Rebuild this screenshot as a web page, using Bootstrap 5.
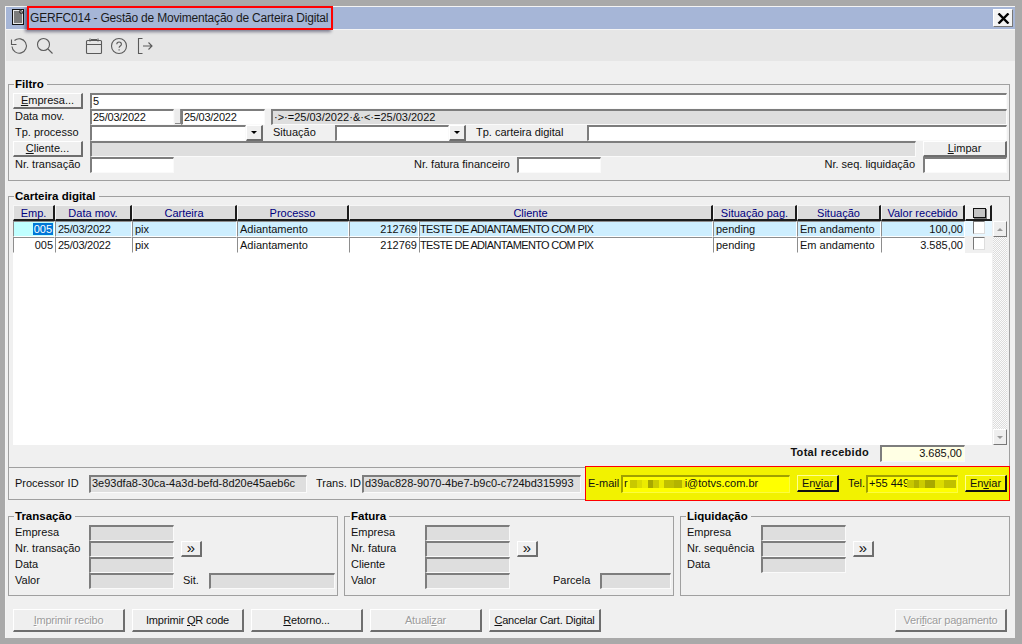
<!DOCTYPE html>
<html lang="pt-BR">
<head>
<meta charset="utf-8">
<title>GERFC014</title>
<link href="https://cdn.jsdelivr.net/npm/bootstrap@5.3.0/dist/css/bootstrap.min.css" rel="stylesheet">
<style>
html,body{margin:0;height:644px;overflow:hidden;background:#a9a9a9}
body{font:11px/16px "Liberation Sans",Arial,sans-serif;color:#111}
.shell{width:1022px;height:644px;padding:6px 7px 6px 5px;background:#a9a9a9}
.pane{height:632px;background:#f0f0f0;border-left:1px solid #f4f4f4;border-top:1px solid #f4f4f4}
.ttl{height:22px;background:#a6b6d7;padding-left:6px;position:relative;flex:none}
.ttl-ico{margin-top:2px;flex:none}
.ttl-text{font-size:12px;line-height:22px;color:#1a1a1a;margin-left:5px;letter-spacing:-.2px;white-space:nowrap}
.ttl-mark{position:absolute;left:21px;top:-1px;width:306px;height:24px;border:2px solid #f00;box-shadow:-2px 2px 3px rgba(0,0,40,.45)}
.xbtn{width:20px;height:18px;margin:2px 2px 0 auto;background:#f3f3f3;border:1px solid;border-color:#fff #777 #777 #fff;padding:0;border-radius:0;display:flex;align-items:center;justify-content:center}
.tools{height:32px;background:#e6e6e6;border-top:1px solid #f4f4f4;padding-left:3px;flex:none}
.tools svg{flex:none}
.ti-mag{margin-left:7px}.ti-cal{margin-left:31px}.ti-hlp{margin-left:7px}.ti-out{margin-left:8px}
.fs{border:1px solid #a0a0a0;min-width:0;margin:0;display:block}
.fs>legend{float:none;width:auto;padding:0 3px 0 1px;font:700 11.5px/14px "Liberation Sans",Arial,sans-serif;color:#000;margin:0 0 0 1px}
.fs-filtro{margin:16px 5px 0 2px;padding:2px 2px 7px 4px}
.fs-cart{margin:8px 5px 0 2px;padding:2px 2px 5px 4px}
.rw{height:16px;display:flex;align-items:stretch}
.rw>*{flex:none}
.lb{padding-left:2px;white-space:nowrap;line-height:15px}
.lb-r{text-align:right;white-space:nowrap;line-height:15px}
.dt{letter-spacing:-.25px}
.form-control.fld{border-radius:0;border-width:2px 1px 1px 2px;border-style:solid;border-color:#7d7d7d #fafafa #fafafa #7d7d7d;min-height:0;height:16px;padding:0 0 0 1px;font:inherit;line-height:13px;color:#111;background:#fff;box-shadow:none;white-space:nowrap;overflow:hidden;flex:none}
.form-control.fld.grow{flex:1 1 0;width:auto;min-width:0}
.form-control.fld.gr,.form-control.fld:disabled{background:#dedede;opacity:1}
.form-control.fld.ye{background:#ffffe4;text-align:right;padding-right:2px}
.btn.wb{border-radius:0;padding:0;font:inherit;line-height:13px;color:#111;background:#efefef;border-style:solid;border-width:1px 2px 2px 1px;border-color:#fff #6e6e6e #6e6e6e #fff;--bs-btn-hover-bg:#efefef;white-space:nowrap}
.btn.wb u{text-underline-offset:1px}
.btn.wb:disabled{opacity:1;color:#9c9c9c;text-shadow:1px 1px 0 #fff;background:#efefef;border-color:#fff #6e6e6e #6e6e6e #fff}
.btn.wb.dd{width:17px;height:16px;flex:none;display:flex;align-items:center;justify-content:center}
.dd-arrow{display:block;width:0;height:0;border:3px solid transparent;border-top:3px solid #000;border-bottom:0}
.form-control.w84,.w84{width:84px}
.form-control.w85{width:85px}
.form-control.w156{width:156px}.form-control.w114{width:114px}.form-control.w126{width:126px}.form-control.w71{width:71px}
.form-control.w218{width:218px}.form-control.w219{width:219px}.form-control.w169{width:169px}.form-control.w92{width:92px}
.form-control.tot-v{width:85px;height:17px;margin-right:42px}
.w70{width:70px}.w77{width:77px}.w336{width:336px}.w314{width:314px}.w62{width:62px}.w111{width:111px}
.g7{margin-left:7px}.g6{margin-left:6px}.g8{margin-left:8px}.g10{margin-left:10px}
.spin{width:7px;height:16px}
.spin-btn{display:block;height:15px;width:6px;margin-left:1px;background:#ececec;border-right:1px solid #8a8a8a;border-bottom:1px solid #8a8a8a}
.gridwrap{width:979px;height:240px;background:#fff;flex:none}
.tb{table-layout:fixed;border-collapse:separate;border-spacing:0;width:979px;margin:0}
.c42{width:42px}.c77{width:77px}.c105{width:105px}.c112{width:112px}.c70{width:70px}.c294{width:294px}.c84{width:84px}.c27{width:27px}
.tb th{height:16px;padding:0;font-weight:400;color:#000080;text-align:center;background:#dcdcdc;border-style:solid;border-width:1px 2px 2px 1px;border-color:#f6f6f6 #1c1c1c #1c1c1c #f6f6f6;line-height:12px;white-space:nowrap;overflow:hidden}
.tb td{height:16px;padding:0 1px 0 2px;border-style:solid;border-width:1px;border-color:#8d8d8d #fff #fff #8d8d8d;line-height:13px;white-space:nowrap;overflow:hidden;background:#fff}
.tb tr.sel td{background:#cdeefe}
.tb tr.sel td.c0{background:#c0ffff}
.tb td.num{text-align:right}
.tb td.caps{letter-spacing:-.65px;padding-left:0}
.tb th.hchk{background:#f0f0f0}
.tb td.tk{padding:0;background:#f0f0f0;border:0;border-bottom:1px solid #f0f0f0;vertical-align:top}
.tb tr.sel td.tk{background:#e6f6ff}
.hb{display:block;width:13px;height:10px;margin:0 auto 0 7px;background:#c4c4c4;border:1px solid #111;box-shadow:1px 1px 0 #777}
.ck{display:block;width:12px;height:13px;margin:0 0 0 8px;background:#fff;border:1px solid;border-color:#777 #ddd #ddd #777}
.hl{background:#0078d7;color:#fff;padding:0 1px}
.scr{width:14px;margin:16px 0 0 1px;height:224px;flex:none;background-image:repeating-conic-gradient(#dcdcdc 0 25%,#fbfbfb 0 50%);background-size:2px 2px;display:flex;flex-direction:column;justify-content:space-between}
.sb{height:16px;background:#eee;border:1px solid;border-color:#fff #777 #777 #fff;display:flex;align-items:center;justify-content:center}
.ar-up{width:0;height:0;border:3px solid transparent;border-bottom:3px solid #999;border-top:0}
.ar-dn{width:0;height:0;border:3px solid transparent;border-top:3px solid #999;border-bottom:0}
.totl{height:17px;display:flex;justify-content:flex-end}
.tot-l{font-weight:700;font-size:11px;margin-right:11px;line-height:15px;letter-spacing:.3px}
.pbox{margin:-1px 5px 0 2px;height:33px;border:1px solid #a0a0a0;flex:none}
.form-control.fld.tall{height:18px}
.yb{width:425px;height:35px;margin:-1px -1px -1px auto;background:#f2f200;border:1px solid #f00}
.lb-p{line-height:15px;white-space:nowrap;flex:none}
.pl-a{margin-left:6px;width:74px}.pl-b{margin-left:9px;width:46px}.pl-c{margin-left:2px;width:33px}.pl-d{margin-left:9px;width:18px}
.form-control.fld.ym{background:#ff0;border-color:#a0a000 #fcfc40 #fcfc40 #a0a000}
.pix{display:inline-block;height:8px;vertical-align:-1px}
.pix1{width:57px;background:linear-gradient(90deg,#f8f800 0 2px,#c8c800 2px 9px,#dcdc00 9px 14px,#ecec00 14px 20px,#a8a800 20px 25px,#cccc00 25px 31px,#ecec00 31px 36px,#c0c000 36px 46px,#b4b400 46px 54px,#e8e800 54px 57px)}
.pix2{width:49px;background:linear-gradient(90deg,#c8c800 0 7px,#b0b000 7px 12px,#cccc00 12px 18px,#a8a800 18px 28px,#dcdc00 28px 37px,#c0c000 37px 49px);margin-left:-2px}
.btn.wb.yenv{width:42px;height:17px;flex:none;background:#f2f200;border-color:#ffff90 #111 #111 #ffff90}
.lowr{margin:9px 5px 0 2px;gap:6px;flex:none}
.fs-low{width:330px;flex:none;padding:2px 2px 6px 6px}
.fs-low>legend{margin-left:-1px}
.lw74{width:74px;white-space:nowrap;line-height:15px}
.lb0{white-space:nowrap;line-height:15px}
.btn.wb.go{width:21px;height:16px;flex:none;margin-left:7px;font-size:15px;line-height:10px;padding-bottom:2px}
.sit-l{width:26px;margin-left:9px}
.par-l{width:47px;margin-left:43px;white-space:nowrap;line-height:15px}
.acts{margin:13px 0 0 7px;gap:7px;padding-right:8px;flex:none}
.btn.wb.act{width:112px;height:23px;flex:none;letter-spacing:-.2px}
</style>
</head>
<body>
<div class="shell">
<div class="pane d-flex flex-column">
  <div class="ttl d-flex align-items-start">
    <svg width="13" height="17" viewBox="0 0 13 17" class="ttl-ico"><rect x=".5" y=".5" width="11" height="15" fill="#e8e8e8" stroke="#111"/><path d="M2 3h8M2 5h8M2 7h8M2 9h8M2 11h8M2 13h8" stroke="#111" stroke-width="1"/><path d="M8 .5l3.500 3.500H8z" fill="#fff" stroke="#111"/></svg>
    <span class="ttl-text">GERFC014 - Gestão de Movimentação de Carteira Digital</span>
    <span class="ttl-mark"></span>
    <button type="button" class="xbtn" aria-label="Fechar"><svg width="13" height="11" viewBox="0 0 13 11"><path d="M1.500 .5l10 10M11.500 .5l-10 10" stroke="#000" stroke-width="2.400"/></svg></button>
  </div>
  <div class="tools d-flex align-items-center">
    <svg width="20" height="18" viewBox="0 0 20 18" fill="none" stroke="#5a5a5a" stroke-width="1.100"><path d="M5.500 3.500A7.200 7.200 0 1 1 3 9.500"/><path d="M2.500 2.500v5h5"/></svg>
    <svg width="18" height="18" viewBox="0 0 18 18" fill="none" stroke="#5a5a5a" stroke-width="1.100" class="ti-mag"><circle cx="7.500" cy="7.500" r="6"/><path d="M12 12l4.500 4.500"/></svg>
    <svg width="18" height="18" viewBox="0 0 18 18" fill="none" stroke="#5a5a5a" stroke-width="1.100" class="ti-cal"><rect x="1.500" y="3.500" width="15" height="13" rx="1"/><path d="M1.500 7.500h15M5 1.500v3M13 1.500v3M6 2.500h6"/></svg>
    <svg width="18" height="18" viewBox="0 0 18 18" fill="none" stroke="#5a5a5a" stroke-width="1.100" class="ti-hlp"><circle cx="9" cy="9" r="7.500"/><path d="M6.800 7.200c0-3 4.600-3 4.600 0 0 1.800-2.300 1.800-2.300 3.500"/><path d="M9.100 12.300v1.200"/></svg>
    <svg width="18" height="18" viewBox="0 0 18 18" fill="none" stroke="#5a5a5a" stroke-width="1.100" class="ti-out"><path d="M6.500 1.500h-4v15h4M7 9h9M12.500 5.500L16 9l-3.500 3.500"/></svg>
  </div>

  <fieldset class="fs fs-filtro">
    <legend>Filtro</legend>
    <div class="rw"><button type="button" class="btn wb w70"><u>E</u>mpresa...</button><div class="form-control fld g7 grow">5</div></div>
    <div class="rw"><span class="lb w77">Data mov.</span><div class="form-control fld w84 dt">25/03/2022</div><span class="spin"><span class="spin-btn"></span></span><div class="form-control fld w84 dt">25/03/2022</div><div class="form-control fld gr g6 grow">·&gt;·=25/03/2022·&amp;·&lt;·=25/03/2022</div></div>
    <div class="rw"><span class="lb w77">Tp. processo</span><input class="form-control fld w156" aria-label="Tp. processo" readonly><button type="button" class="btn wb dd" aria-label="Abrir"><i class="dd-arrow"></i></button><span class="lb-p g10 w62">Situação</span><input class="form-control fld w114" aria-label="Situação" readonly><button type="button" class="btn wb dd" aria-label="Abrir"><i class="dd-arrow"></i></button><span class="lb-p g10 w111">Tp. carteira digital</span><input class="form-control fld grow" aria-label="Tp. carteira digital" readonly></div>
    <div class="rw"><button type="button" class="btn wb w70"><u>C</u>liente...</button><div class="form-control fld gr g7 grow"></div><button type="button" class="btn wb w84 g7"><u>L</u>impar</button></div>
    <div class="rw"><span class="lb w77">Nr. transação</span><input class="form-control fld w84" aria-label="Nr. transação" readonly><span class="lb-r w336">Nr. fatura financeiro</span><input class="form-control fld w84 g7" aria-label="Nr. fatura financeiro" readonly><span class="lb-r w314">Nr. seq. liquidação</span><input class="form-control fld w84 g8" aria-label="Nr. seq. liquidação" readonly></div>
  </fieldset>

  <fieldset class="fs fs-cart">
    <legend>Carteira digital</legend>
    <div class="d-flex">
      <div class="gridwrap">
        <table class="tb">
          <colgroup><col class="c42"><col class="c77"><col class="c105"><col class="c112"><col class="c70"><col class="c294"><col class="c84"><col class="c84"><col class="c84"><col class="c27"></colgroup>
          <thead><tr><th>Emp.</th><th>Data mov.</th><th>Carteira</th><th>Processo</th><th colspan="2">Cliente</th><th>Situação pag.</th><th>Situação</th><th>Valor recebido</th><th class="hchk"><i class="hb"></i></th></tr></thead>
          <tbody>
            <tr class="sel"><td class="num c0"><span class="hl">005</span></td><td class="dt">25/03/2022</td><td>pix</td><td>Adiantamento</td><td class="num">212769</td><td class="caps">TESTE DE ADIANTAMENTO COM PIX</td><td>pending</td><td>Em andamento</td><td class="num">100,00</td><td class="tk"><i class="ck"></i></td></tr>
            <tr><td class="num">005</td><td class="dt">25/03/2022</td><td>pix</td><td>Adiantamento</td><td class="num">212769</td><td class="caps">TESTE DE ADIANTAMENTO COM PIX</td><td>pending</td><td>Em andamento</td><td class="num">3.585,00</td><td class="tk"><i class="ck"></i></td></tr>
          </tbody>
        </table>
      </div>
      <div class="scr"><span class="sb"><i class="ar-up"></i></span><span class="sb"><i class="ar-dn"></i></span></div>
    </div>
    <div class="totl"><span class="tot-l">Total recebido</span><div class="form-control fld ye tot-v">3.685,00</div></div>
  </fieldset>

  <div class="pbox d-flex align-items-center">
    <span class="lb-p pl-a">Processor ID</span>
    <div class="form-control fld gr tall w218">3e93dfa8-30ca-4a3d-befd-8d20e45aeb6c</div>
    <span class="lb-p pl-b">Trans. ID</span>
    <div class="form-control fld gr tall w219">d39ac828-9070-4be7-b9c0-c724bd315993</div>
    <div class="yb d-flex align-items-center">
      <span class="lb-p pl-c">E-mail</span>
      <div class="form-control fld tall ym w169">r<span class="pix pix1"></span>i@totvs.com.br</div>
      <button type="button" class="btn wb yenv g7">En<u>v</u>iar</button>
      <span class="lb-p pl-d">Tel.</span>
      <div class="form-control fld tall ym w92">+55 449<span class="pix pix2"></span></div>
      <button type="button" class="btn wb yenv g7">En<u>v</u>iar</button>
    </div>
  </div>

  <div class="lowr d-flex">
    <fieldset class="fs fs-low">
      <legend>Transação</legend>
      <div class="rw"><span class="lw74">Empresa</span><input class="form-control fld w85" aria-label="Empresa" disabled></div>
      <div class="rw"><span class="lw74">Nr. transação</span><input class="form-control fld w85" aria-label="Nr. transação" disabled><button type="button" class="btn wb go">»</button></div>
      <div class="rw"><span class="lw74">Data</span><input class="form-control fld w85" aria-label="Data" disabled></div>
      <div class="rw"><span class="lw74">Valor</span><input class="form-control fld w85" aria-label="Valor" disabled><span class="lb0 sit-l">Sit.</span><input class="form-control fld w126" aria-label="Sit." disabled></div>
    </fieldset>
    <fieldset class="fs fs-low">
      <legend>Fatura</legend>
      <div class="rw"><span class="lw74">Empresa</span><input class="form-control fld w85" aria-label="Empresa" disabled></div>
      <div class="rw"><span class="lw74">Nr. fatura</span><input class="form-control fld w85" aria-label="Nr. fatura" disabled><button type="button" class="btn wb go">»</button></div>
      <div class="rw"><span class="lw74">Cliente</span><input class="form-control fld w85" aria-label="Cliente" disabled></div>
      <div class="rw"><span class="lw74">Valor</span><input class="form-control fld w85" aria-label="Valor" disabled><span class="par-l">Parcela</span><input class="form-control fld w71" aria-label="Parcela" disabled></div>
    </fieldset>
    <fieldset class="fs fs-low">
      <legend>Liquidação</legend>
      <div class="rw"><span class="lw74">Empresa</span><input class="form-control fld w85" aria-label="Empresa" disabled></div>
      <div class="rw"><span class="lw74">Nr. sequência</span><input class="form-control fld w85" aria-label="Nr. sequência" disabled><button type="button" class="btn wb go">»</button></div>
      <div class="rw"><span class="lw74">Data</span><input class="form-control fld w85" aria-label="Data" disabled></div>
      <div class="rw"></div>
    </fieldset>
  </div>

  <div class="acts d-flex">
    <button type="button" class="btn wb act" disabled><u>I</u>mprimir recibo</button>
    <button type="button" class="btn wb act">Imprimir <u>Q</u>R code</button>
    <button type="button" class="btn wb act"><u>R</u>etorno...</button>
    <button type="button" class="btn wb act" disabled>Atuali<u>z</u>ar</button>
    <button type="button" class="btn wb act"><u>C</u>ancelar Cart. Digital</button>
    <button type="button" class="btn wb act ms-auto" disabled>Veri<u>f</u>icar pagamento</button>
  </div>
</div>
</div>
</body>
</html>
